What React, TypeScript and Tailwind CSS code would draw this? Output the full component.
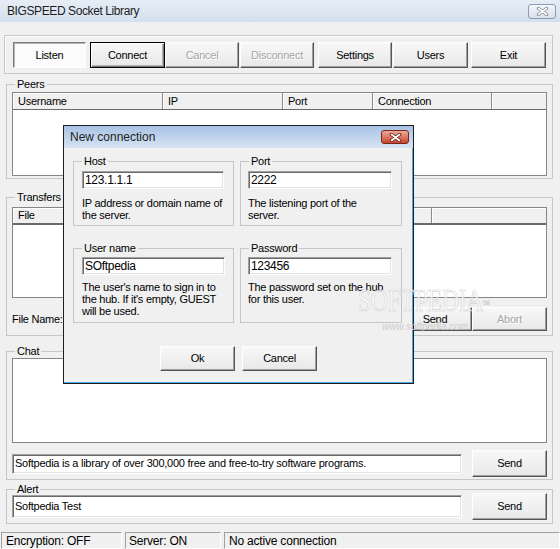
import type { ReactNode } from "react";

const raised =
  "border border-t-white border-l-white border-r-[#555] border-b-[#555] shadow-[inset_-1px_-1px_0_#a0a0a0] bg-gradient-to-b from-[#f8f8f8] to-[#e8e8e8]";
const sunken =
  "bg-white border border-t-[#a0a0a0] border-l-[#a0a0a0] border-r-white border-b-white shadow-[inset_1px_1px_0_#696969,inset_-1px_-1px_0_#e3e3e3]";

function Btn({
  children,
  className = "",
  kind = "normal",
}: {
  children: ReactNode;
  className?: string;
  kind?: "normal" | "default" | "pressed" | "disabled";
}) {
  let look = raised;
  if (kind === "default")
    look =
      "border border-black shadow-[inset_1px_1px_0_#fff,inset_-1px_-1px_0_#7a7a7a,inset_-2px_-2px_0_#b0b0b0] bg-gradient-to-b from-[#f8f8f8] to-[#e8e8e8]";
  if (kind === "pressed")
    look =
      "border border-t-[#7a7a7a] border-l-[#7a7a7a] border-r-white border-b-white shadow-[inset_1px_1px_0_#b5b5b5] bg-[#fbfbfb]";
  return (
    <div
      className={`${look} flex shrink-0 items-center justify-center ${
        kind === "disabled" ? "text-[#a6a6a6] [text-shadow:1px_1px_0_#fff]" : "text-black"
      } ${className}`}
    >
      {children}
    </div>
  );
}

function Group({
  label,
  className = "",
  children,
}: {
  label: string;
  className?: string;
  children?: ReactNode;
}) {
  return (
    <fieldset className={`min-w-0 shrink-0 border border-[#c6c6c6] ${className}`}>
      <legend className="ml-[8px] px-[2px] leading-[12px]">{label}</legend>
      {children}
    </fieldset>
  );
}

function HeadCell({ children, className = "" }: { children?: ReactNode; className?: string }) {
  return (
    <div
      className={`flex h-full shrink-0 items-center border-r border-[#8a8a8a] pl-[5px] shadow-[inset_1px_1px_0_#fff] ${className}`}
    >
      {children}
    </div>
  );
}

function CloseX({ dark, light }: { dark: string; light: string }) {
  return (
    <svg width={13} height={9} viewBox="0 0 13 9">
      <path d="M2.5 1.5 L10.5 7.5 M10.5 1.5 L2.5 7.5" stroke={dark} strokeWidth="3.4" strokeLinecap="round" />
      <path d="M2.5 1.5 L10.5 7.5 M10.5 1.5 L2.5 7.5" stroke={light} strokeWidth="1.6" strokeLinecap="round" />
    </svg>
  );
}

export default function App() {
  return (
    <div className="relative flex h-[549px] w-[560px] flex-col overflow-hidden bg-[#f0f0f0] font-['Liberation_Sans',Arial,sans-serif] text-[11px] tracking-[-0.25px] text-black select-none">
      {/* title bar */}
      <div className="flex h-[22px] shrink-0 items-center bg-gradient-to-b from-[#e6edf6] to-[#d4e0ee] pl-[7px] pr-[4px]">
        <span className="text-[12px] tracking-[-0.4px] text-[#1e1e1e]">BIGSPEED Socket Library</span>
        <div className="ml-auto flex h-[15px] w-[28px] items-center justify-center rounded-[3px] border border-[#8c9bb0] bg-gradient-to-b from-[#f3f6fa] to-[#d8e0eb]">
          <CloseX dark="#7f8a99" light="#ffffff" />
        </div>
      </div>

      {/* toolbar */}
      <div className="ml-[4px] mt-[13px] flex h-[39px] w-[549px] shrink-0 border border-[#c6c6c6] pl-[8px] pt-[6px] shadow-[inset_1px_1px_0_#fff]">
        <Btn kind="pressed" className="h-[26px] w-[73px]">Listen</Btn>
        <Btn kind="default" className="ml-[4px] h-[26px] w-[75px]">Connect</Btn>
        <Btn kind="disabled" className="h-[26px] w-[74px]">Cancel</Btn>
        <Btn kind="disabled" className="ml-[1px] h-[26px] w-[74px]">Disconnect</Btn>
        <Btn className="ml-[4px] h-[26px] w-[74px]">Settings</Btn>
        <Btn className="ml-[1px] h-[26px] w-[75px]">Users</Btn>
        <Btn className="ml-[3px] h-[26px] w-[75px]">Exit</Btn>
      </div>

      {/* peers */}
      <Group label="Peers" className="ml-[6px] mt-[4px] h-[101px] w-[547px]">
        <div className="mx-[5px] mt-[2px] flex h-[84px] flex-col border border-[#858585] bg-white">
          <div className="flex h-[17px] shrink-0 border-b border-[#6a6a6a] bg-[#f0f0f0]">
            <HeadCell className="w-[150px]">Username</HeadCell>
            <HeadCell className="w-[120px]">IP</HeadCell>
            <HeadCell className="w-[90px]">Port</HeadCell>
            <HeadCell className="w-[119px]">Connection</HeadCell>
            <HeadCell className="flex-1 border-r-0" />
          </div>
        </div>
      </Group>

      {/* transfers */}
      <Group label="Transfers" className="ml-[6px] mt-[12px] h-[145px] w-[547px]">
        <div className="mx-[5px] mt-[4px] flex h-[91px] flex-col border border-[#858585] bg-white">
          <div className="flex h-[17px] shrink-0 border-b-2 border-[#6a6a6a] bg-[#f0f0f0]">
            <HeadCell className="w-[419px]">File</HeadCell>
            <HeadCell className="flex-1 border-r-0" />
          </div>
        </div>
        <div className="mx-[5px] mt-[9px] flex h-[24px] items-center">
          <span className="w-[52px] shrink-0">File Name:</span>
          <div className={`${sunken} h-[21px] flex-1`} />
          <Btn className="ml-[3px] h-[24px] w-[74px]">Send</Btn>
          <Btn kind="disabled" className="h-[24px] w-[75px]">Abort</Btn>
        </div>
      </Group>

      {/* chat */}
      <Group label="Chat" className="ml-[6px] mt-[9px] h-[135px] w-[547px]">
        <div className="mx-[5px] mt-[1px] h-[85px] border border-[#858585] bg-white" />
        <div className="mx-[5px] mt-[7px] flex h-[27px] items-center">
          <div className={`${sunken} flex h-[20px] w-[450px] items-center pl-[2px] whitespace-nowrap`}>
            Softpedia is a library of over 300,000 free and free-to-try software programs.
          </div>
          <Btn className="ml-[10px] h-[27px] w-[75px]">Send</Btn>
        </div>
      </Group>

      {/* alert */}
      <Group label="Alert" className="ml-[6px] mt-[3px] h-[41px] w-[547px]">
        <div className="mx-[5px] -mt-[2px] flex h-[27px] items-center">
          <div className={`${sunken} flex h-[23px] w-[450px] items-center pl-[2px]`}>Softpedia Test</div>
          <Btn className="ml-[10px] h-[27px] w-[75px]">Send</Btn>
        </div>
      </Group>

      {/* status bar */}
      <div className="mt-auto flex h-[17px] shrink-0 gap-[3px] pl-[1px] text-[12px] tracking-[-0.2px]">
        <div className="flex w-[121px] items-center border border-t-[#a0a0a0] border-l-[#a0a0a0] border-r-white border-b-white pl-[4px]">
          Encryption: OFF
        </div>
        <div className="flex w-[96px] items-center border border-t-[#a0a0a0] border-l-[#a0a0a0] border-r-white border-b-white pl-[3px]">
          Server: ON
        </div>
        <div className="flex flex-1 items-center border border-t-[#a0a0a0] border-l-[#a0a0a0] border-r-white border-b-white pl-[4px]">
          No active connection
        </div>
      </div>

      {/* New connection dialog */}
      <div className="absolute left-[63px] top-[125px] flex h-[259px] w-[351px] flex-col border border-[#1e1e1e] bg-[#f0f0f0] shadow-[inset_-1px_-1px_0_#4aa6e4]">
        <div className="flex h-[22px] shrink-0 items-center bg-gradient-to-b from-[#a8c3e5] to-[#d7e4f3] pl-[6px] pr-[4px]">
          <span className="text-[12px] tracking-[0px] text-[#1e1e1e]">New connection</span>
          <div className="ml-auto flex h-[14px] w-[28px] items-center justify-center rounded-[3px] border border-[#7a2618] bg-gradient-to-b from-[#eba898] to-[#c5442c]">
            <CloseX dark="#6b2416" light="#ffffff" />
          </div>
        </div>

        <div className="mt-[7px] flex gap-[6px] pl-[9px]">
          <Group label="Host" className="h-[71px] w-[161px]">
            <div className={`${sunken} ml-[8px] mt-[4px] flex h-[18px] w-[142px] items-center pl-[2px] text-[12px] tracking-[-0.3px]`}>
              123.1.1.1
            </div>
            <p className="ml-[8px] mt-[8px] leading-[12px]">
              IP address or domain name of
              <br />
              the server.
            </p>
          </Group>
          <Group label="Port" className="h-[71px] w-[162px]">
            <div className={`${sunken} ml-[7px] mt-[4px] flex h-[18px] w-[144px] items-center pl-[2px] text-[12px] tracking-[-0.3px]`}>
              2222
            </div>
            <p className="ml-[7px] mt-[8px] leading-[12px]">
              The listening port of the
              <br />
              server.
            </p>
          </Group>
        </div>

        <div className="mt-[16px] flex gap-[6px] pl-[9px]">
          <Group label="User name" className="h-[81px] w-[161px]">
            <div className={`${sunken} ml-[8px] mt-[3px] flex h-[18px] w-[143px] items-center pl-[2px] text-[12px] tracking-[-0.3px]`}>
              SOftpedia
            </div>
            <p className="ml-[8px] mt-[6px] leading-[12px]">
              The user&apos;s name to sign in to
              <br />
              the hub. If it&apos;s empty, GUEST
              <br />
              will be used.
            </p>
          </Group>
          <Group label="Password" className="h-[81px] w-[162px]">
            <div className={`${sunken} ml-[7px] mt-[3px] flex h-[18px] w-[144px] items-center pl-[2px] text-[12px] tracking-[-0.3px]`}>
              123456
            </div>
            <p className="ml-[7px] mt-[6px] leading-[12px]">
              The password set on the hub
              <br />
              for this user.
            </p>
          </Group>
        </div>

        <div className="mt-[23px] flex justify-center gap-[7px]">
          <Btn className="h-[25px] w-[75px]">Ok</Btn>
          <Btn className="h-[25px] w-[75px]">Cancel</Btn>
        </div>
      </div>

      {/* watermark */}
      <div className="pointer-events-none absolute left-[358px] top-[284px] flex flex-col items-start">
        <span className="origin-top scale-y-[1.35] font-['Liberation_Serif',serif] text-[24px] leading-[24px] tracking-[-0.5px] text-white/60 [-webkit-text-stroke:0.5px_#d4d4d4]">
          SOFTPEDIA<sup className="text-[7px] tracking-[0px]">™</sup>
        </span>
        <span className="ml-[24px] mt-[14px] text-[10px] italic leading-[10px] tracking-[0px] text-[#cdcdcd]">
          www.softpedia.com
        </span>
      </div>
    </div>
  );
}
